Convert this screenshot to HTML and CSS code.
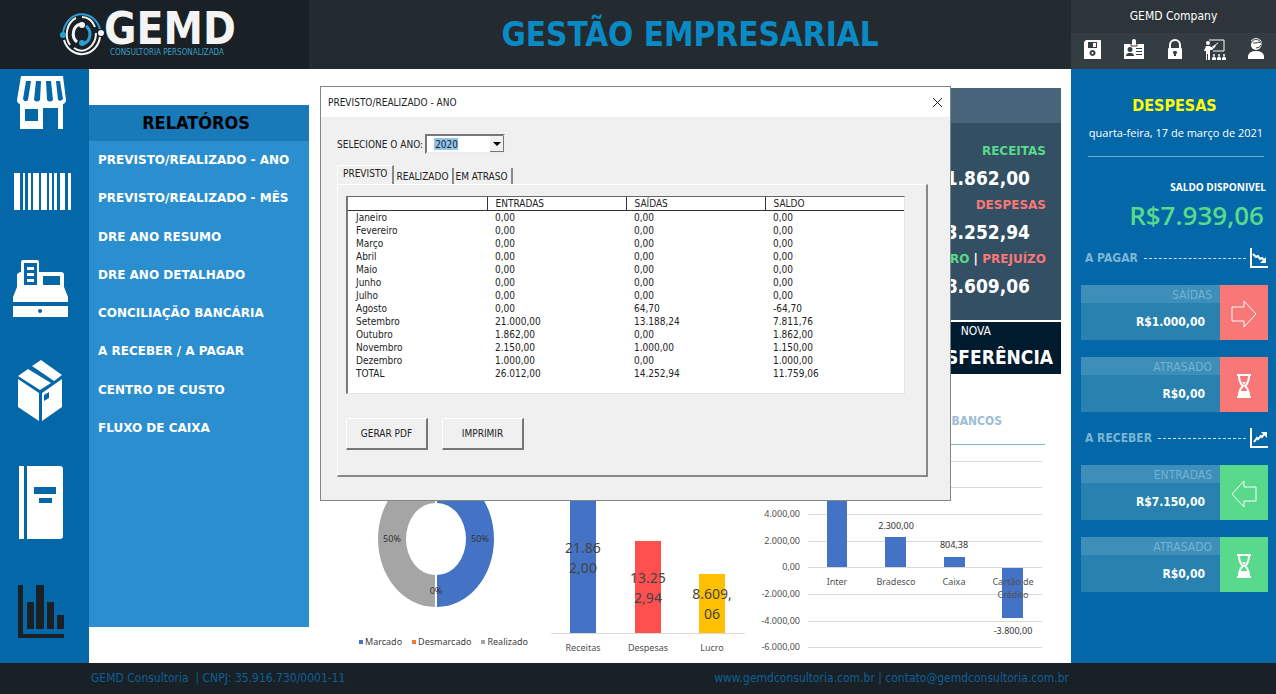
FILE: index.html
```html
<!DOCTYPE html>
<html lang="pt-BR">
<head>
<meta charset="utf-8">
<title>GEMD - Gestão Empresarial</title>
<link rel="stylesheet" href="styles.css">
</head>
<body>
<div class="app">
  <header class="top">
    <div class="brand">
      <svg class="brand-mark" width="44" height="46" viewBox="0 0 44 46" fill="none" stroke-width="2">
        <path d="M3 23a19 21.500 0 0 1 37-5" stroke="#2a9fd6"/>
        <path d="M4 29a18.500 20 0 0 0 36-3" stroke="#f4f4f4"/>
        <path d="M16 7a15 17.500 0 0 0-6 27M22 6a14.500 17.500 0 0 1 13 10M36 22a14.500 17.500 0 0 1-22 15" stroke="#f4f4f4"/>
        <path d="M17 31a9 10 0 0 1 4-18" stroke="#f4f4f4" stroke-width="3"/>
        <path d="M26 15a9 10 0 0 1-3 18" stroke="#2a9fd6" stroke-width="3"/>
        <circle cx="3" cy="24" r="3" fill="#2a9fd6"/><circle cx="22" cy="32" r="3" fill="#2a9fd6"/>
        <circle cx="22" cy="14" r="3" fill="#f4f4f4"/><circle cx="41" cy="22" r="3" fill="#f4f4f4"/>
      </svg>
      <div class="brand-text">
        <span class="brand-name">GEMD</span>
        <span class="brand-sub">CONSULTORIA PERSONALIZADA</span>
      </div>
    </div>
    <h1 class="title">GESTÃO EMPRESARIAL</h1>
    <div class="account">
      <div class="company">GEMD Company</div>
      <div class="tools">
        <button class="icon-btn" aria-label="Salvar"><svg width="22" height="24" viewBox="0 0 22 24"><path fill="#fff" fill-rule="evenodd" d="M4 2h14a1 1 0 0 1 1 1v18H2V4zM6 4v6h9V4zM10.500 12a3 3 0 1 0 .1 0zM10.500 14a1 1 0 1 1-.1 0z"/><path fill="#fff" d="M11 5h3v4h-3z"/></svg></button>
        <button class="icon-btn" aria-label="Cadastro"><svg width="22" height="24" viewBox="0 0 22 24"><path fill="#fff" fill-rule="evenodd" d="M9 3a2 2 0 0 1 4 0v3h8v15H1V6h8zM7 9a2.500 2.500 0 1 0 .1 0zM3 18h8v-1l-2-2H5l-2 2zM13 10v1h6v-1zM13 13v1h6v-1zM13 16v1h6v-1z"/><path stroke="#343d41" d="M8 5v3h6V5" fill="none"/></svg></button>
        <button class="icon-btn" aria-label="Bloquear"><svg width="22" height="24" viewBox="0 0 22 24"><path d="M6 11V7a5 5 0 0 1 10 0v4" fill="none" stroke="#fff" stroke-width="2"/><path fill="#fff" fill-rule="evenodd" d="M5 10h12a1 1 0 0 1 1 1v10H4V11a1 1 0 0 1 1-1zM11 13a1.500 1.500 0 0 0-1 3v2h2v-2a1.500 1.500 0 0 0-1-3z"/></svg></button>
        <button class="icon-btn" aria-label="Treinamento"><svg width="22" height="24" viewBox="0 0 22 24" fill="#fff"><path d="M5 2h15v11H9" fill="none" stroke="#fff"/><path d="m7 10 7-5" stroke="#fff"/><circle cx="4" cy="5" r="2"/><path d="M2 8h4l2 2 3-3 1 1-4 4H6v10H4v-6H3v6H2V13H0z"/><circle cx="10" cy="17" r="1"/><circle cx="15" cy="17" r="1"/><circle cx="20" cy="17" r="1"/><path d="M8 20l2-2 2 2v2H8zM13 20l2-2 2 2v2h-4zM18 20l2-2 2 2v2h-4z"/></svg></button>
        <button class="icon-btn" aria-label="Suporte"><svg width="22" height="24" viewBox="0 0 22 24" fill="#fff"><circle cx="11" cy="7" r="5"/><path d="M6 3q5-5 10 0v5q-1 3-5 3" fill="none" stroke="#fff"/><path d="M8 5q5 0 8-1M11 10q4 0 5-3" fill="none" stroke="#343d41"/><path d="M3 21v-3q1-5 8-5t8 5v3z"/></svg></button>
      </div>
    </div>
  </header>

  <div class="body">
    <nav class="rail" aria-label="Módulos">
      <button class="icon-btn" aria-label="Loja"><svg width="58" height="54" viewBox="0 0 58 54"><path fill="#fff" fill-rule="evenodd" d="M8 0h42l3 24q0 3-3 4v25h-5V32H30v21H7V28q-3-1-3-4zM13 5 10 23q2 4 5 1L18 5zM23 5l-2 19q3 3 6 0L28 5zM33 5l1 19q3 3 6 0L38 5zM43 5l2 19q3 2 5-1L47 5zM12 33v12h13V33z"/></svg></button>
      <button class="icon-btn" aria-label="Produtos"><svg width="58" height="44" viewBox="0 0 58 44" fill="#fff"><path d="M1 0h6v37H1zM10 0h2v37h-2zM15 0h3v37h-3zM20 0h6v37h-6zM28 0h6v37h-6zM36 0h3v37h-3zM41 0h3v37h-3zM47 0h5v37h-5zM55 0h3v37h-3z"/></svg></button>
      <button class="icon-btn" aria-label="Caixa"><svg width="58" height="57" viewBox="0 0 58 57"><path fill="#fff" fill-rule="evenodd" d="M10 0h14q2 0 2 2v10h22q3 0 3 3v12l4 10v5H0v-5l4-10V15q0-2 4-3V2q0-2 2-2zM11 3v22h13V3zM30 16v9h17v-9zM0 46h55v11H0zM27 49a2 2 0 1 0 .1 0z"/><path fill="#fff" d="M14 7h7v3h-7zM14 13h7v3h-7zM14 19h7v3h-7z"/></svg></button>
      <button class="icon-btn" aria-label="Estoque"><svg width="58" height="61" viewBox="0 0 58 61" fill="#fff"><path d="m28 0 21 15-8 6L19 6zM15 9l23 14-11 7L5 16zM5 19l21 14v28L5 47zM49 19v28L29 61V33zM31 35v6l5-3v-6z" fill-rule="evenodd"/></svg></button>
      <button class="icon-btn" aria-label="Cadernos"><svg width="58" height="76" viewBox="0 0 58 76"><path fill="#fff" fill-rule="evenodd" d="M6 2h5v73H6zM14 2h33q3 0 3 3v67q0 3-3 3H14zM21 23v7h22v-7zM26 34v5h13v-5z"/></svg></button>
      <button class="icon-btn" aria-label="Relatórios"><svg width="58" height="56" viewBox="0 0 58 56" fill="#192126"><path d="M5 2h5v49h41v4H5zM14 19h7v27h-7zM23 2h8v44h-8zM34 19h7v27h-7zM44 32h7v14h-7z"/></svg></button>
    </nav>

    <aside class="menu">
      <h2 class="menu-head">RELATÓROS</h2>
      <ul class="menu-list">
        <li><a href="#">PREVISTO/REALIZADO - ANO</a></li>
        <li><a href="#">PREVISTO/REALIZADO - MÊS</a></li>
        <li><a href="#">DRE ANO RESUMO</a></li>
        <li><a href="#">DRE ANO DETALHADO</a></li>
        <li><a href="#">CONCILIAÇÃO BANCÁRIA</a></li>
        <li><a href="#">A RECEBER / A PAGAR</a></li>
        <li><a href="#">CENTRO DE CUSTO</a></li>
        <li><a href="#">FLUXO DE CAIXA</a></li>
      </ul>
    </aside>

    <main class="main">
      <div class="summary">
        <section class="kpis">
          <div class="kpis-head"></div>
          <div class="kpis-body">
            <span class="kpi-label pos">RECEITAS</span>
            <span class="kpi-value">21.862,00</span>
            <span class="kpi-label neg">DESPESAS</span>
            <span class="kpi-value">13.252,94</span>
            <span class="kpi-label"><span class="pos">LUCRO</span> | <span class="neg">PREJUÍZO</span></span>
            <span class="kpi-value">8.609,06</span>
          </div>
        </section>
        <button class="transfer"><span>NOVA</span><strong>TRANSFERÊNCIA</strong></button>
      </div>

      <div class="charts">
        <section class="donut">
          <svg width="190" height="178" viewBox="0 0 190 178">
            <path d="M92 21a57 68 0 0 1 0 136v-32a29 36 0 0 0 0-72z" fill="#4472c4"/>
            <path d="M90 21a57 68 0 0 0 0 136v-32a29 36 0 0 1 0-72z" fill="#a5a5a5"/>
            <g class="chart-text dark" text-anchor="middle"><text x="47" y="92">50%</text><text x="135" y="92">50%</text><text x="91" y="144">0%</text></g>
          </svg>
          <ul class="legend"><li class="l-blue">Marcado</li><li class="l-orange">Desmarcado</li><li class="l-gray">Realizado</li></ul>
        </section>
        <svg width="194" height="213" viewBox="0 0 194 213">
          <path d="M0 183.500h194" stroke="#d9d9d9"/>
          <path d="M19 20h26v163H19z" fill="#4472c4"/><path d="M84 91h26v92H84z" fill="#ff5050"/><path d="M148 124h26v59h-26z" fill="#ffc000"/>
          <g class="bar-text" text-anchor="middle"><text x="32" y="103">21.86</text><text x="32" y="123">2,00</text><text x="97" y="133">13.25</text><text x="97" y="153">2,94</text><text x="161" y="149">8.609,</text><text x="161" y="169">06</text></g>
          <g class="chart-text" text-anchor="middle"><text x="32" y="201">Receitas</text><text x="97" y="201">Despesas</text><text x="161" y="201">Lucro</text></g>
        </svg>
        <section class="banks">
          <h3 class="banks-title">BANCOS</h3>
          <svg width="285" height="213" viewBox="0 0 285 213">
            <path d="M48 11.500h234M48 37.500h234M48 64.500h234M48 91.500h234M48 117.500h234M48 144.500h234M48 171.500h234M48 197.500h234" stroke="#d9d9d9"/>
            <path d="M67 2h20v115H67zM125 87h21v30h-21zM184 107h21v10h-21zM242 118h21v50h-21z" fill="#4472c4"/>
            <g class="chart-text" text-anchor="end"><text x="40" y="67">4.000,00</text><text x="40" y="94">2.000,00</text><text x="40" y="120">0,00</text><text x="40" y="147">-2.000,00</text><text x="40" y="174">-4.000,00</text><text x="40" y="200">-6.000,00</text></g>
            <g class="chart-text" text-anchor="middle"><text x="77" y="135">Inter</text><text x="136" y="135">Bradesco</text><text x="194" y="135">Caixa</text><text x="253" y="135">Cartão de</text><text x="253" y="148">Crédito</text></g>
            <g class="chart-text dark" text-anchor="middle"><text x="136" y="79">2.300,00</text><text x="194" y="98">804,38</text><text x="253" y="184">-3.800,00</text></g>
          </svg>
        </section>
      </div>

      <div class="dialog" role="dialog" aria-labelledby="dlg-title">
        <div class="dialog-bar"><span id="dlg-title">PREVISTO/REALIZADO - ANO</span>
          <button class="close" aria-label="Fechar"><svg width="11" height="11" viewBox="0 0 11 11"><path d="m1 1 9 9M10 1l-9 9" stroke="#222" fill="none"/></svg></button></div>
        <div class="dialog-body">
          <div class="year-row">
            <label for="year">SELECIONE O ANO:</label>
            <span class="combo"><select id="year"><option>2020</option><option>2021</option></select><span class="combo-arrow"></span></span>
          </div>
          <div class="tabs" role="tablist">
            <button class="tab active" role="tab" aria-selected="true">PREVISTO</button>
            <button class="tab" role="tab">REALIZADO</button>
            <button class="tab" role="tab">EM ATRASO</button>
          </div>
          <div class="panel">
            <div class="list">
              <table>
                <thead><tr><th></th><th>ENTRADAS</th><th>SAÍDAS</th><th>SALDO</th></tr></thead>
                <tbody>
                  <tr><td>Janeiro</td><td>0,00</td><td>0,00</td><td>0,00</td></tr>
                  <tr><td>Fevereiro</td><td>0,00</td><td>0,00</td><td>0,00</td></tr>
                  <tr><td>Março</td><td>0,00</td><td>0,00</td><td>0,00</td></tr>
                  <tr><td>Abril</td><td>0,00</td><td>0,00</td><td>0,00</td></tr>
                  <tr><td>Maio</td><td>0,00</td><td>0,00</td><td>0,00</td></tr>
                  <tr><td>Junho</td><td>0,00</td><td>0,00</td><td>0,00</td></tr>
                  <tr><td>Julho</td><td>0,00</td><td>0,00</td><td>0,00</td></tr>
                  <tr><td>Agosto</td><td>0,00</td><td>64,70</td><td>-64,70</td></tr>
                  <tr><td>Setembro</td><td>21.000,00</td><td>13.188,24</td><td>7.811,76</td></tr>
                  <tr><td>Outubro</td><td>1.862,00</td><td>0,00</td><td>1.862,00</td></tr>
                  <tr><td>Novembro</td><td>2.150,00</td><td>1.000,00</td><td>1.150,00</td></tr>
                  <tr><td>Dezembro</td><td>1.000,00</td><td>0,00</td><td>1.000,00</td></tr>
                  <tr><td>TOTAL</td><td>26.012,00</td><td>14.252,94</td><td>11.759,06</td></tr>
                </tbody>
              </table>
            </div>
            <div class="actions"><button class="btn">GERAR PDF</button><button class="btn">IMPRIMIR</button></div>
          </div>
        </div>
      </div>
    </main>

    <aside class="side">
      <h2 class="side-title">DESPESAS</h2>
      <p class="date">quarta-feira, 17 de março de 2021</p>
      <p class="avail">SALDO DISPONIVEL</p>
      <p class="balance">R$7.939,06</p>
      <div class="section"><h3>A PAGAR</h3><span class="dash"></span><svg width="18" height="20" viewBox="0 0 18 20" fill="none" stroke="#fff"><path d="M1 0v19h17" stroke-width="2"/><path d="m3 6 3 3 2-1 2 3 2-1 3 3" stroke-width="2"/><path d="M16 9v6h-6z" fill="#fff" stroke="none"/></svg></div>
      <div class="entry red"><div class="entry-text"><span>SAÍDAS</span><b>R$1.000,00</b></div><div class="entry-icon"><svg width="26" height="30" viewBox="0 0 26 30" fill="none" stroke="#fff"><path d="M1 8h12V2l12 13-12 13v-6H1z"/></svg></div></div>
      <div class="entry red"><div class="entry-text"><span>ATRASADO</span><b>R$0,00</b></div><div class="entry-icon"><svg width="16" height="24" viewBox="0 0 16 24"><path d="M1 1h14M1 23h14M3 1q0 8 4 11-4 3-4 11M13 1q0 8-4 11 4 3 4 11" fill="none" stroke="#fff" stroke-width="2"/><path d="M3 17h10l1 6H2zM6 8h4l-2 3z" fill="#fff"/></svg></div></div>
      <div class="section"><h3>A RECEBER</h3><span class="dash"></span><svg width="18" height="20" viewBox="0 0 18 20" fill="none" stroke="#fff"><path d="M1 0v19h17" stroke-width="2"/><path d="m4 14 3-4 1 1 3-3 1 1 3-4" stroke-width="2"/><path d="M11 4h6v6z" fill="#fff" stroke="none"/></svg></div>
      <div class="entry green"><div class="entry-text"><span>ENTRADAS</span><b>R$7.150,00</b></div><div class="entry-icon"><svg width="26" height="30" viewBox="0 0 26 30" fill="none" stroke="#fff"><path d="M25 8H13V2L1 15l12 13v-6h12z"/></svg></div></div>
      <div class="entry green"><div class="entry-text"><span>ATRASADO</span><b>R$0,00</b></div><div class="entry-icon"><svg width="16" height="24" viewBox="0 0 16 24"><path d="M1 1h14M1 23h14M3 1q0 8 4 11-4 3-4 11M13 1q0 8-4 11 4 3 4 11" fill="none" stroke="#fff" stroke-width="2"/><path d="M3 17h10l1 6H2zM6 8h4l-2 3z" fill="#fff"/></svg></div></div>
    </aside>
  </div>

  <footer class="foot"><span>GEMD Consultoria &nbsp;| CNPJ: 35.916.730/0001-11</span><span>www.gemdconsultoria.com.br | contato@gemdconsultoria.com.br</span></footer>
</div>
</body>
</html>
```

FILE: styles.css
```css
* { box-sizing: border-box; }
body, h1, h2, h3, p, ul { margin: 0; padding: 0; }
ul { list-style: none; }
body { font-family: "DejaVu Sans Condensed", "DejaVu Sans", sans-serif; font-size: 12px; background: #fff; }
button { font: inherit; margin: 0; padding: 0; border: 0; background: none; color: inherit; }
svg { display: block; flex: none; }

.app { min-height: 100vh; display: grid; grid-template-rows: auto 1fr auto; }

.top { display: grid; grid-template-columns: 309px 1fr 205px; background: #242b30; }
.brand { display: flex; align-items: flex-start; padding: 11px 0 0 60px; background: #192126; }
.brand-text { display: flex; flex-direction: column; color: #f4f4f4; }
.brand-name { font-size: 44px; line-height: 36px; font-weight: bold; }
.brand-sub { padding-left: 6px; font-size: 8px; line-height: 12px; color: #3f9cc4; }
.title { align-self: center; text-align: center; font-size: 33px; line-height: 40px; color: #0a8ac5; }
.account { background: #343d41; color: #fff; }
.company { height: 33px; line-height: 33px; text-align: center; background: #2d353a; }
.tools { height: 36px; display: flex; align-items: center; justify-content: space-between; padding: 0 9px 2px 11px; }

.body { display: grid; grid-template-columns: 89px 220px 1fr 205px; }
.rail { display: flex; flex-direction: column; gap: 43px; padding: 7px 0 0 13px; background: #0467a8; }
.rail .icon-btn { align-self: flex-start; }

.menu { align-self: start; margin-top: 36px; padding-bottom: 180px; background: #2b8fcf; }
.menu-head { line-height: 36px; padding-right: 6px; text-align: center; font-size: 18px; color: #000; background: #187ab9; }
.menu-list { height: 306px; display: grid; grid-auto-rows: 1fr; align-items: center; padding-left: 9px; }
.menu-list a { font-family: "DejaVu Sans", sans-serif; color: #fff; font-weight: bold; text-decoration: none; }

.main { position: relative; padding: 19px 10px 0 11px; display: flex; flex-direction: column; }
.summary { width: 182px; align-self: flex-end; display: flex; flex-direction: column; gap: 2px; color: #fff; font-weight: bold; }
.kpis { background: #334f63; }
.kpis-head { height: 35px; background: #47647a; }
.kpis-body { display: flex; flex-direction: column; align-items: flex-end; padding: 16px 15px 19px 0; }
.kpi-label { font-family: "DejaVu Sans", sans-serif; line-height: 24px; }
.kpi-value { font-size: 19px; line-height: 30px; padding-right: 16px; }
.pos { color: #58d98b; }
.neg { color: #f87777; }
.transfer { height: 52px; padding-right: 8px; display: flex; flex-direction: column; align-items: flex-end; background: #001a2e; color: #fff; }
.transfer span { line-height: 18px; padding-right: 62px; font-weight: normal; }
.transfer strong { font-size: 19px; line-height: 34px; }

.charts { display: flex; align-items: flex-end; justify-content: space-between; padding: 36px 16px 0 25px; }
.donut { width: 190px; }
.legend { height: 35px; display: flex; align-items: flex-start; gap: 10px; padding: 6px 0 0 14px; font: 9px/16px "Noto Sans", sans-serif; color: #404040; }
.legend li { display: flex; align-items: center; gap: 2px; }
.legend li::before { content: ""; width: 4px; height: 4px; background: #4472c4; }
.legend .l-orange::before { background: #ed7d31; }
.legend .l-gray::before { background: #a5a5a5; }
.chart-text { font: 9px "Noto Sans", sans-serif; fill: #505050; }
.chart-text.dark { fill: #333; }
.bar-text { font: 14px "Noto Sans", sans-serif; fill: #444; }
.banks-title { height: 35px; margin-bottom: 5px; padding-right: 43px; line-height: 22px; text-align: right; font-size: 12px; color: #9dbdd6; border-bottom: 1px solid #86b3d1; }

.dialog { position: absolute; left: 11px; right: 120px; top: 17px; border: 1px solid #7f8783; background: #f0f0f0; color: #222; font-size: 10px; }
.dialog-bar { display: flex; align-items: center; justify-content: space-between; height: 30px; padding: 0 7px; background: #fff; }
.dialog-body { padding: 17px 22px 23px 16px; }
.year-row { display: flex; align-items: center; gap: 2px; }
.combo { position: relative; width: 80px; height: 20px; }
.combo select { width: 80px; height: 20px; padding: 0 0 0 8px; appearance: none; font: inherit; color: #222; border: 2px solid; border-color: #777 #eee #eee #777; border-radius: 0; background: linear-gradient(#90c4ec, #90c4ec) 7px 2px / 24px 12px no-repeat #fff; }
.combo-arrow { position: absolute; right: 1px; top: 2px; width: 14px; height: 16px; background: #f0f0f0; border-right: 1px solid #777; border-bottom: 1px solid #777; pointer-events: none; }
.combo-arrow::after { content: ""; position: absolute; left: 3px; top: 6px; border: 4px solid transparent; border-top-color: #000; border-bottom: 0; }
.tabs { display: flex; align-items: flex-end; margin-top: 11px; }
.tab { height: 16px; padding: 0 3px 0 2px; border-right: 2px solid #888; }
.tab.active { height: 19px; padding: 0 5px 3px 5px; border-left: 1px solid #fff; border-top: 1px solid #fff; }
.panel { padding: 11px 21px 25px 8px; border: 1px solid #fff; border-right: 2px solid #888; border-bottom: 2px solid #888; }
.list { height: 198px; background: #fff; border: 1px solid #e4e4e4; border-top: 1px solid #666; border-left: 2px solid #777; }
.list table { width: 100%; table-layout: fixed; border-collapse: collapse; }
.list th, .list td { padding: 0 0 0 8px; height: 13px; line-height: 13px; text-align: left; font-weight: normal; }
.list th { border-bottom: 1px solid #333; border-right: 1px solid #333; }
.list th:last-child { border-right: 0; }
.actions { display: flex; gap: 14px; margin-top: 24px; }
.btn { width: 82px; height: 32px; border: 1px solid #fff; border-right: 2px solid #777; border-bottom: 2px solid #777; }

.side { display: flex; flex-direction: column; padding: 27px 8px 0 10px; background: #0467a8; color: #fff; }
.side-title { text-align: center; font-size: 16px; line-height: 20px; color: #ff0; }
.date { margin: 0 4px 0 7px; padding: 7px 0 13px; text-align: center; font: 11px/20px "Open Sans", sans-serif; border-bottom: 1px solid #6fa9cf; }
.avail { margin-top: 18px; padding-right: 2px; text-align: right; font: bold 10px/24px "Open Sans", sans-serif; }
.balance { padding-right: 4px; text-align: right; font: 600 26px/32px "Open Sans", sans-serif; color: #58d98b; }
.section { height: 54px; display: flex; align-items: center; gap: 6px; padding-left: 4px; }
.section h3 { font-size: 12px; color: #79b6d6; }
.section svg { margin-left: -2px; }
.dash { flex: 1; border-top: 1px dashed #cfe2ef; }
.entry { display: grid; grid-template-columns: 1fr 48px; height: 54px; }
.entry + .entry { margin-top: 18px; }
.entry-text { display: flex; flex-direction: column; text-align: right; background: #2981b0; }
.entry-text span { height: 18px; line-height: 20px; padding-right: 8px; color: #72b3d2; background: #3d8eb8; }
.entry-text b { line-height: 36px; padding: 1px 15px 0 0; }
.entry-icon { display: grid; place-items: center; padding-top: 2px; }
.red .entry-icon { background: #f87777; }
.green .entry-icon { background: #58d98b; }

.foot { display: flex; justify-content: space-between; padding: 0 207px 0 91px; line-height: 31px; background: #192126; color: #0d5f97; }
```
